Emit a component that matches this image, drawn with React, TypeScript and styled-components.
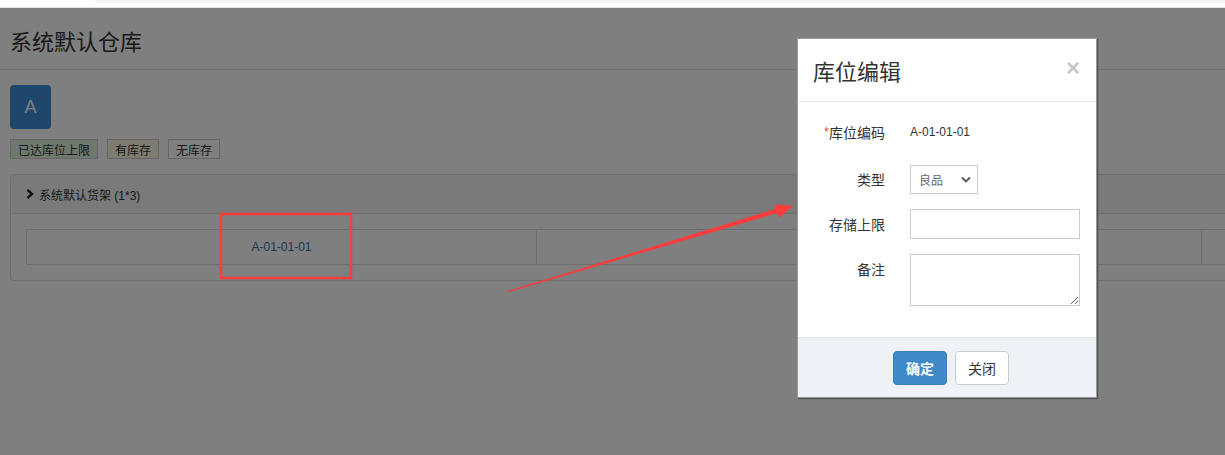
import React from 'react';
import styled, { createGlobalStyle } from 'styled-components';

const GlobalStyle = createGlobalStyle`
  html, body {
    margin: 0;
    padding: 0;
    background: #fff;
    overflow: hidden;
    font-family: "Liberation Sans", "Noto Sans CJK SC", sans-serif;
    color: #333;
  }
  * { box-sizing: border-box; }
`;

const BrowserBar = styled.div`
  height: 8px;
  background: #fff;
  border-bottom: 1px solid #e4e4e4;
  padding-left: 95px;
`;

const BrowserTab = styled.div`
  height: 3px;
  background: #f1f3f6;
  border-bottom-left-radius: 6px;
`;

const Stage = styled.div`
  position: relative;
  height: 447px;
  width: 1280px;
`;

const PageTitle = styled.div`
  height: 62px;
  padding: 3px 0 0 10px;
  display: flex;
  align-items: center;
  font-size: 22px;
  color: #333;
  border-bottom: 1px solid #e0e0e0;
`;

const Content = styled.div`
  padding: 15px 10px 0 10px;
`;

const AreaButton = styled.div`
  width: 41px;
  height: 44px;
  border-radius: 4px;
  background: #3e8ed6;
  color: #fff;
  font-size: 18px;
  display: flex;
  align-items: center;
  justify-content: center;
`;

const Legend = styled.div`
  display: flex;
  gap: 9px;
  margin-top: 10px;
`;

const Tag = styled.span<{ bg: string }>`
  height: 20px;
  padding: 0 7px;
  display: inline-flex;
  align-items: center;
  font-size: 12px;
  color: #333;
  background: ${(p) => p.bg};
  border: 1px solid #ccc;
`;

const Panel = styled.div`
  margin-top: 15px;
  border: 1px solid #ddd;
  border-radius: 4px;
  width: 1250px;
`;

const PanelHeader = styled.div`
  height: 39px;
  padding: 0 15px;
  background: #f5f5f5;
  border-bottom: 1px solid #ddd;
  border-radius: 4px 4px 0 0;
  display: flex;
  align-items: center;
  gap: 5px;
  font-size: 12px;
  color: #333;
`;

const PanelBody = styled.div`
  padding: 15px;
`;

const ShelfRow = styled.div`
  display: flex;
  height: 36px;
  border: 1px solid #ddd;
`;

const ShelfCell = styled.div<{ w?: number }>`
  flex: ${(p) => (p.w ? `0 0 ${p.w}px` : '1')};
  border-right: 1px solid #ddd;
  display: flex;
  align-items: center;
  justify-content: center;
  font-size: 12px;
  color: #2f6fa8;
`;

const Backdrop = styled.div`
  position: absolute;
  inset: 0;
  background: rgba(0, 0, 0, 0.5);
`;

const Annotations = styled.svg`
  position: absolute;
  left: 0;
  top: 0;
  width: 1225px;
  height: 447px;
  pointer-events: none;
`;

const Modal = styled.div`
  position: absolute;
  left: 797px;
  top: 30px;
  width: 300px;
  background: #fff;
  border: 1px solid #9a9a9a;
  box-shadow: 1px 1px 1px rgba(0, 0, 0, 0.35);
`;

const ModalHeader = styled.div`
  height: 63px;
  padding: 0 16px 0 15px;
  border-bottom: 1px solid #e5e5e5;
  display: flex;
  align-items: center;
  justify-content: space-between;
`;

const ModalTitle = styled.h4`
  margin: 0;
  font-size: 22px;
  font-weight: normal;
  color: #333;
`;

const CloseButton = styled.span`
  font-size: 24px;
  font-weight: bold;
  color: #c8c8c8;
  line-height: 1;
  margin-top: -4px;
`;

const ModalBody = styled.div`
  padding: 13px 16px 31px 0;
  display: grid;
  grid-template-columns: 87px 1fr;
  column-gap: 25px;
  row-gap: 15px;
`;

const Label = styled.div<{ h: number; top?: boolean }>`
  height: ${(p) => p.h}px;
  display: flex;
  align-items: ${(p) => (p.top ? 'flex-start' : 'center')};
  justify-content: flex-end;
  padding-top: ${(p) => (p.top ? '5px' : '0')};
  font-size: 14px;
  color: #333;
`;

const Required = styled.span`
  color: #e4393c;
  font-size: 12px;
`;

const Value = styled.div`
  display: flex;
  align-items: center;
  font-size: 12px;
  color: #333;
`;

const SelectBox = styled.div`
  width: 68px;
  height: 29px;
  margin-top: 1px;
  border: 1px solid #ccc;
  display: flex;
  align-items: center;
  justify-content: space-between;
  padding: 0 6px 0 8px;
  font-size: 12px;
  color: #666;
`;

const TextInput = styled.input`
  width: 170px;
  height: 30px;
  border: 1px solid #ccc;
  margin: 0;
  padding: 0 6px;
  outline: none;
`;

const TextArea = styled.textarea`
  width: 170px;
  height: 52px;
  border: 1px solid #ccc;
  margin: 0;
  padding: 4px 6px;
  display: block;
  resize: both;
  outline: none;
`;

const ModalFooter = styled.div`
  height: 60px;
  background: #eef1f6;
  border-top: 1px solid #e2e5ea;
  display: flex;
  align-items: center;
  justify-content: center;
  gap: 8px;
  padding-left: 8px;
`;

const Button = styled.button<{ primary?: boolean }>`
  width: 54px;
  height: 34px;
  border-radius: 4px;
  font-family: inherit;
  font-size: 14px;
  font-weight: ${(p) => (p.primary ? 'bold' : 'normal')};
  color: ${(p) => (p.primary ? '#fff' : '#333')};
  background: ${(p) => (p.primary ? '#3f89c9' : '#fff')};
  border: 1px solid ${(p) => (p.primary ? '#3a80bd' : '#ccc')};
  padding: 0;
`;

const Chevron = () => (
  <svg width="8" height="10" viewBox="0 0 8 10">
    <path d="M1.5 1 L6 5 L1.5 9" fill="none" stroke="#222" strokeWidth="2.4" />
  </svg>
);

const SelectArrow = () => (
  <svg width="10" height="7" viewBox="0 0 10 7">
    <path d="M1 1.5 L5 5.5 L9 1.5" fill="none" stroke="#555" strokeWidth="1.8" />
  </svg>
);

const App: React.FC = () => {
  return (
    <>
      <GlobalStyle />
      <BrowserBar>
        <BrowserTab />
      </BrowserBar>
      <Stage>
        <PageTitle>系统默认仓库</PageTitle>
        <Content>
          <AreaButton>A</AreaButton>
          <Legend>
            <Tag bg="#dff0d8">已达库位上限</Tag>
            <Tag bg="#fcf8e3">有库存</Tag>
            <Tag bg="#fff">无库存</Tag>
          </Legend>
          <Panel>
            <PanelHeader>
              <Chevron />
              系统默认货架 (1*3)
            </PanelHeader>
            <PanelBody>
              <ShelfRow>
                <ShelfCell w={510}>A-01-01-01</ShelfCell>
                <ShelfCell w={665} />
                <ShelfCell />
              </ShelfRow>
            </PanelBody>
          </Panel>
        </Content>

        <Backdrop />

        <Annotations viewBox="0 0 1225 447">
          <rect x="221" y="206" width="130" height="64" fill="none" stroke="#ff3b3b" strokeWidth="2.5" />
          <polygon
            points="507.2,284.6 777.3,205 778.9,210 793,198 774.7,196.2 776.1,200.8 506.8,283.4"
            fill="#ff3b3b"
          />
        </Annotations>

        <Modal>
          <ModalHeader>
            <ModalTitle>库位编辑</ModalTitle>
            <CloseButton>×</CloseButton>
          </ModalHeader>
          <ModalBody>
            <Label h={34}>
              <Required>*</Required>库位编码
            </Label>
            <Value>A-01-01-01</Value>

            <Label h={30}>类型</Label>
            <div>
              <SelectBox>
                良品
                <SelectArrow />
              </SelectBox>
            </div>

            <Label h={30}>存储上限</Label>
            <div>
              <TextInput readOnly />
            </div>

            <Label h={52} top>
              备注
            </Label>
            <div>
              <TextArea readOnly />
            </div>
          </ModalBody>
          <ModalFooter>
            <Button primary>确定</Button>
            <Button>关闭</Button>
          </ModalFooter>
        </Modal>
      </Stage>
    </>
  );
};

export default App;
